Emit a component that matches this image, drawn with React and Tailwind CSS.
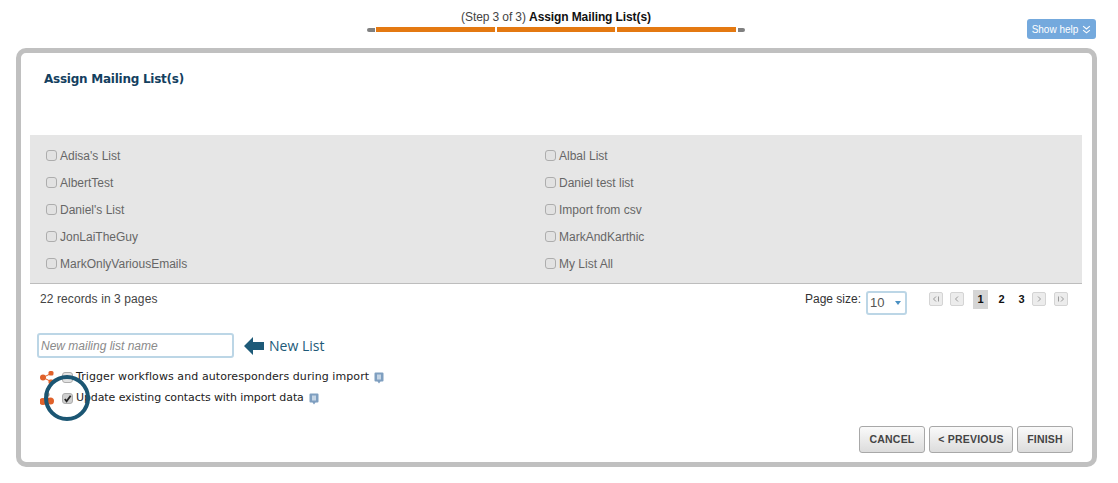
import React from 'react'

const lists = [
  ["Adisa's List", 'Albal List'],
  ['AlbertTest', 'Daniel test list'],
  ["Daniel's List", 'Import from csv'],
  ['JonLaiTheGuy', 'MarkAndKarthic'],
  ['MarkOnlyVariousEmails', 'My List All'],
]

const Box = ({ checked }) => (
  <span className={`w-[11px] h-[11px] shrink-0 rounded-[3px] border border-[#adadad] flex items-center justify-center ${checked ? 'bg-[#cfcfcf]' : 'bg-[#e2e2e2]'}`}>
    {checked && (
      <svg className="w-[9px] h-[9px]" viewBox="0 0 10 10" fill="none" stroke="#222" strokeWidth="2">
        <path d="M2 5.500 L4 8 L8.500 2" />
      </svg>
    )}
  </span>
)

const HelpIcon = () => (
  <svg className="w-[10px] h-[12px] shrink-0" viewBox="0 0 10 12">
    <path d="M1.500 0.500h7a1 1 0 0 1 1 1v7a1 1 0 0 1-1 1H6.500L5 11.500 3.500 9.500H1.500a1 1 0 0 1-1-1v-7a1 1 0 0 1 1-1z" fill="#7f9fc0" />
    <rect x="3" y="2.500" width="4" height="5" fill="#c5d5e5" />
  </svg>
)

const PagerBtn = ({ d, className }) => (
  <span className={`w-[14px] h-[14px] rounded-[2px] border border-[#d4d4d4] bg-[#ececec] flex items-center justify-center ${className}`}>
    <svg className="w-[8px] h-[8px]" viewBox="0 0 8 8" fill="none" stroke="#999" strokeWidth="1">
      <path d={d} />
    </svg>
  </span>
)

const ActionBtn = ({ w, children }) => (
  <button className={`${w} h-[27px] rounded-[3px] border border-[#a8a8a8] bg-gradient-to-b from-[#fafafa] to-[#dcdcdc] text-[10.5px] font-bold text-[#444] tracking-[0.2px]`}>
    {children}
  </button>
)

const App = () => {
  return (
    <div className="relative w-[1118px] h-[483px] bg-white overflow-hidden font-['Liberation_Sans',Arial,sans-serif]">
      {/* wizard header */}
      <div className="h-[48px] flex">
        <div className="ml-[367px] w-[378px] pt-[10px]">
          <p className="text-[12px] leading-[14px] text-center text-[#444] tracking-[-0.1px]">
            (Step 3 of 3) <b className="text-[#111]">Assign Mailing List(s)</b>
          </p>
          <div className="mt-[3px] flex items-center gap-px">
            <span className="w-[8px] h-[4px] rounded-l-full bg-[#808080]" />
            <span className="w-[119px] h-[5px] bg-[#e47911]" />
            <span className="w-[119px] ml-px h-[5px] bg-[#e47911]" />
            <span className="w-[119px] ml-px h-[5px] bg-[#e47911]" />
            <span className="w-[7px] h-[4px] ml-px rounded-r-full bg-[#808080]" />
          </div>
        </div>
        <button className="ml-[282px] mt-[19px] w-[69px] h-[20px] rounded-[3px] bg-[#74a9dd] text-white text-[10px] flex items-center justify-center gap-[4px]">
          Show help
          <svg className="w-[9px] h-[9px]" viewBox="0 0 8 8" fill="none" stroke="white" strokeWidth="1">
            <path d="M1 1l3 2.500L7 1M1 4.500L4 7l3-2.500" />
          </svg>
        </button>
      </div>

      {/* main panel */}
      <div className="ml-4 w-[1081px] h-[419px] rounded-[10px] border-[5px] border-[#c0c0c0] flex flex-col">
        <h1 className="ml-[23px] mt-[18px] h-[64px] text-[12px] leading-[16px] font-bold text-[#143f5f] font-['DejaVu_Sans',Verdana,sans-serif] tracking-[-0.25px]">
          Assign Mailing List(s)
        </h1>

        <div className="ml-[9px] mr-[10px] h-[149px] bg-[#e6e6e6] border-b border-[#bdbdbd] pt-[7px] pl-[16px]">
          {lists.map(([a, b]) => (
            <div key={a} className="h-[27px] grid grid-cols-[499px_1fr] text-[12px] text-[#666] items-center">
              <label className="flex items-center gap-[3px]"><Box />{a}</label>
              <label className="flex items-center gap-[3px]"><Box />{b}</label>
            </div>
          ))}
        </div>

        <div className="ml-[19px] mr-[24px] h-[30px] flex items-center text-[12px] text-[#444]">
          <span className="tracking-[0.1px]">22 records in 3 pages</span>
          <span className="ml-auto text-[#333]">Page size:</span>
          <span className="ml-[5px] mt-[8px] w-[41px] h-[24px] rounded-[3px] border-2 border-[#bcd6e6] flex items-center justify-between pl-[2px] pr-[4px] text-[13px] text-[#555]">
            10
            <span className="w-0 h-0 border-x-[3.500px] border-x-transparent border-t-[4px] border-t-[#4a90c2]" />
          </span>
          <div className="ml-[22px] flex items-center">
            <PagerBtn d="M4 1.500L1.500 4 4 6.500M6.500 1.500v5" />
            <PagerBtn className="ml-[7px]" d="M5 1.500L2.500 4 5 6.500" />
            <span className="ml-[9px] w-[15px] h-[19px] bg-[#d5d5d5] text-center font-bold text-[11px] leading-[18px] text-[#111]">1</span>
            <span className="ml-[7px] w-[13px] text-center font-bold text-[11px] text-[#111]">2</span>
            <span className="ml-[7px] w-[13px] text-center font-bold text-[11px] text-[#111]">3</span>
            <PagerBtn className="ml-[4px]" d="M3 1.500L5.500 4 3 6.500" />
            <PagerBtn className="ml-[8px]" d="M1.500 1.500v5M4 1.500L6.500 4 4 6.500" />
          </div>
        </div>

        <div className="ml-[16px] mt-[19px] flex items-center">
          <input
            readOnly
            placeholder="New mailing list name"
            className="w-[197px] h-[25px] rounded-[3px] border-2 border-[#bcd6e6] px-[2px] text-[12px] italic placeholder:text-[#8a8a8a] outline-none"
          />
          <svg className="ml-[10px] w-[20px] h-[18px]" viewBox="0 0 20 18">
            <path d="M0 9L9 0v5h11v8H9v5z" fill="#1d5a78" />
          </svg>
          <span className="ml-[5px] text-[14px] text-[#1d5a78] font-['Open_Sans',sans-serif]">New List</span>
        </div>

        <div className="ml-[19px] mt-[9px] text-[11px] text-[#222] font-['DejaVu_Sans',Verdana,sans-serif]">
          <div className="h-[21px] flex items-center">
            <svg className="w-[14px] h-[13px] shrink-0" viewBox="0 0 14 13" fill="#e0612a">
              <circle cx="3" cy="6.500" r="3" />
              <rect x="8.500" y="0" width="5" height="4.500" rx="1.500" />
              <rect x="8.500" y="8.500" width="5" height="4.500" rx="1.500" />
              <path d="M3 6.500L11 2.500M3 6.500L11 10.500" stroke="#e0612a" strokeWidth="1" />
            </svg>
            <span className="ml-[8px]"><Box /></span>
            <span className="ml-[3px] tracking-[0.08px]">Trigger workflows and autoresponders during import</span>
            <span className="ml-[5px]"><HelpIcon /></span>
          </div>
          <div className="h-[21px] flex items-center">
            <svg className="w-[14px] h-[13px] shrink-0" viewBox="0 0 14 13" fill="#e0612a">
              <circle cx="7" cy="2.500" r="2.500" fill="#a08a7c" />
              <circle cx="3" cy="9.500" r="3.500" />
              <circle cx="10.500" cy="9" r="3.500" />
              <circle cx="7" cy="7" r="2" fill="#c9502a" />
            </svg>
            <span className="ml-[8px]"><Box checked /></span>
            <span className="ml-[3px] tracking-[-0.1px]">Update existing contacts with import data</span>
            <span className="ml-[5px]"><HelpIcon /></span>
          </div>
        </div>

        <div className="mt-[17px] mr-[19px] flex justify-end gap-[4px]">
          <ActionBtn w="w-[66px]">CANCEL</ActionBtn>
          <ActionBtn w="w-[84px]">&lt; PREVIOUS</ActionBtn>
          <ActionBtn w="w-[56px]">FINISH</ActionBtn>
        </div>
      </div>

      {/* annotation ring around the checkbox */}
      <div className="absolute left-[44px] top-[375px] w-[46px] h-[46px] rounded-full border-[4px] border-[#1b5673]" />
    </div>
  )
}

export default App
